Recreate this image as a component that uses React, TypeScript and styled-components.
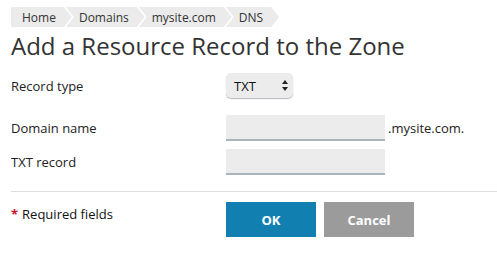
import React, { useState } from "react";
import styled, { createGlobalStyle } from "styled-components";

const GlobalStyle = createGlobalStyle`
  html, body {
    margin: 0;
    padding: 0;
    background: #fff;
  }
  body {
    font-family: "Open Sans", "Liberation Sans", sans-serif;
    color: #222;
    overflow: hidden;
  }
`;

const Page = styled.div`
  padding: 7px 0 0 11px;
`;

const Crumbs = styled.nav`
  display: flex;
  height: 20px;
`;

const Crumb = styled.a<{ $first?: boolean }>`
  display: flex;
  align-items: center;
  height: 20px;
  padding: 0 16px 0 ${(p) => (p.$first ? "11px" : "13px")};
  margin-left: ${(p) => (p.$first ? "0" : "-6px")};
  background: #ebebeb;
  color: #333;
  font-size: 12px;
  text-decoration: none;
  clip-path: ${(p) =>
    p.$first
      ? "polygon(0 0, calc(100% - 8px) 0, 100% 50%, calc(100% - 8px) 100%, 0 100%)"
      : "polygon(0 0, calc(100% - 8px) 0, 100% 50%, calc(100% - 8px) 100%, 0 100%, 8px 50%)"};
`;

const Title = styled.h1`
  margin: 4px 0 0;
  font-size: 24px;
  font-weight: 400;
  line-height: 29px;
  color: #333;
`;

const Form = styled.form`
  margin-top: 13px;
`;

const Row = styled.div<{ $gap: number }>`
  display: grid;
  grid-template-columns: 215px auto;
  align-items: center;
  margin-bottom: ${(p) => p.$gap}px;
`;

const Label = styled.label`
  font-size: 13px;
  color: #222;
`;

const Field = styled.div`
  display: flex;
  align-items: center;
  gap: 3px;
  font-size: 13px;
  color: #222;
`;

const SelectBox = styled.div`
  position: relative;
  width: 67px;
  height: 25px;
`;

const Select = styled.select`
  appearance: none;
  width: 100%;
  height: 100%;
  border: none;
  border-radius: 5px;
  background: #ececec;
  box-shadow: 0 1px 1px #b4b9bd;
  padding: 0 0 0 8px;
  font-family: "Open Sans", "Liberation Sans", sans-serif;
  font-size: 13px;
  color: #111;
  outline: none;
`;

const Arrows = styled.svg`
  position: absolute;
  right: 5px;
  top: 7px;
  pointer-events: none;
`;

const Input = styled.input`
  box-sizing: border-box;
  width: 159px;
  height: 26px;
  border: none;
  border-bottom: 2px solid #a9b4bc;
  background: #ececec;
  padding: 0 6px;
  font-size: 13px;
  outline: none;
`;

const Divider = styled.hr`
  margin: 16px 0 10px;
  border: none;
  border-top: 1px solid #dddddd;
`;

const Footer = styled.div`
  display: grid;
  grid-template-columns: 215px auto;
`;

const Required = styled.div`
  font-size: 13px;
  line-height: 24px;
  color: #111;
`;

const Star = styled.span`
  color: #c8102e;
  font-weight: 700;
  margin-right: 4px;
`;

const Buttons = styled.div`
  display: flex;
  gap: 8px;
`;

const Button = styled.button<{ $primary?: boolean }>`
  width: 90px;
  height: 35px;
  border: none;
  background: ${(p) => (p.$primary ? "#1180b0" : "#9b9b9b")};
  color: #fff;
  font-family: "Open Sans", "Liberation Sans", sans-serif;
  font-size: 13px;
  font-weight: 700;
  cursor: pointer;
`;

const App: React.FC = () => {
  const [type, setType] = useState("TXT");
  const [domain, setDomain] = useState("");
  const [txt, setTxt] = useState("");

  return (
    <Page>
      <GlobalStyle />
      <Crumbs>
        <Crumb $first href="#">Home</Crumb>
        <Crumb href="#">Domains</Crumb>
        <Crumb href="#">mysite.com</Crumb>
        <Crumb href="#">DNS</Crumb>
      </Crumbs>
      <Title>Add a Resource Record to the Zone</Title>
      <Form onSubmit={(e) => e.preventDefault()}>
        <Row $gap={17}>
          <Label>Record type</Label>
          <SelectBox>
            <Select value={type} onChange={(e) => setType(e.target.value)}>
              <option>A</option>
              <option>CNAME</option>
              <option>MX</option>
              <option>TXT</option>
            </Select>
            <Arrows width="6" height="11" viewBox="0 0 6 11">
              <path d="M3 0 L6 4 L0 4 Z M0 7 L6 7 L3 11 Z" fill="#222" />
            </Arrows>
          </SelectBox>
        </Row>
        <Row $gap={8}>
          <Label>Domain name</Label>
          <Field>
            <Input value={domain} onChange={(e) => setDomain(e.target.value)} />
            .mysite.com.
          </Field>
        </Row>
        <Row $gap={0}>
          <Label>TXT record</Label>
          <Field>
            <Input value={txt} onChange={(e) => setTxt(e.target.value)} />
          </Field>
        </Row>
        <Divider />
        <Footer>
          <Required>
            <Star>*</Star>Required fields
          </Required>
          <Buttons>
            <Button $primary type="submit">OK</Button>
            <Button type="button">Cancel</Button>
          </Buttons>
        </Footer>
      </Form>
    </Page>
  );
};

export default App;
